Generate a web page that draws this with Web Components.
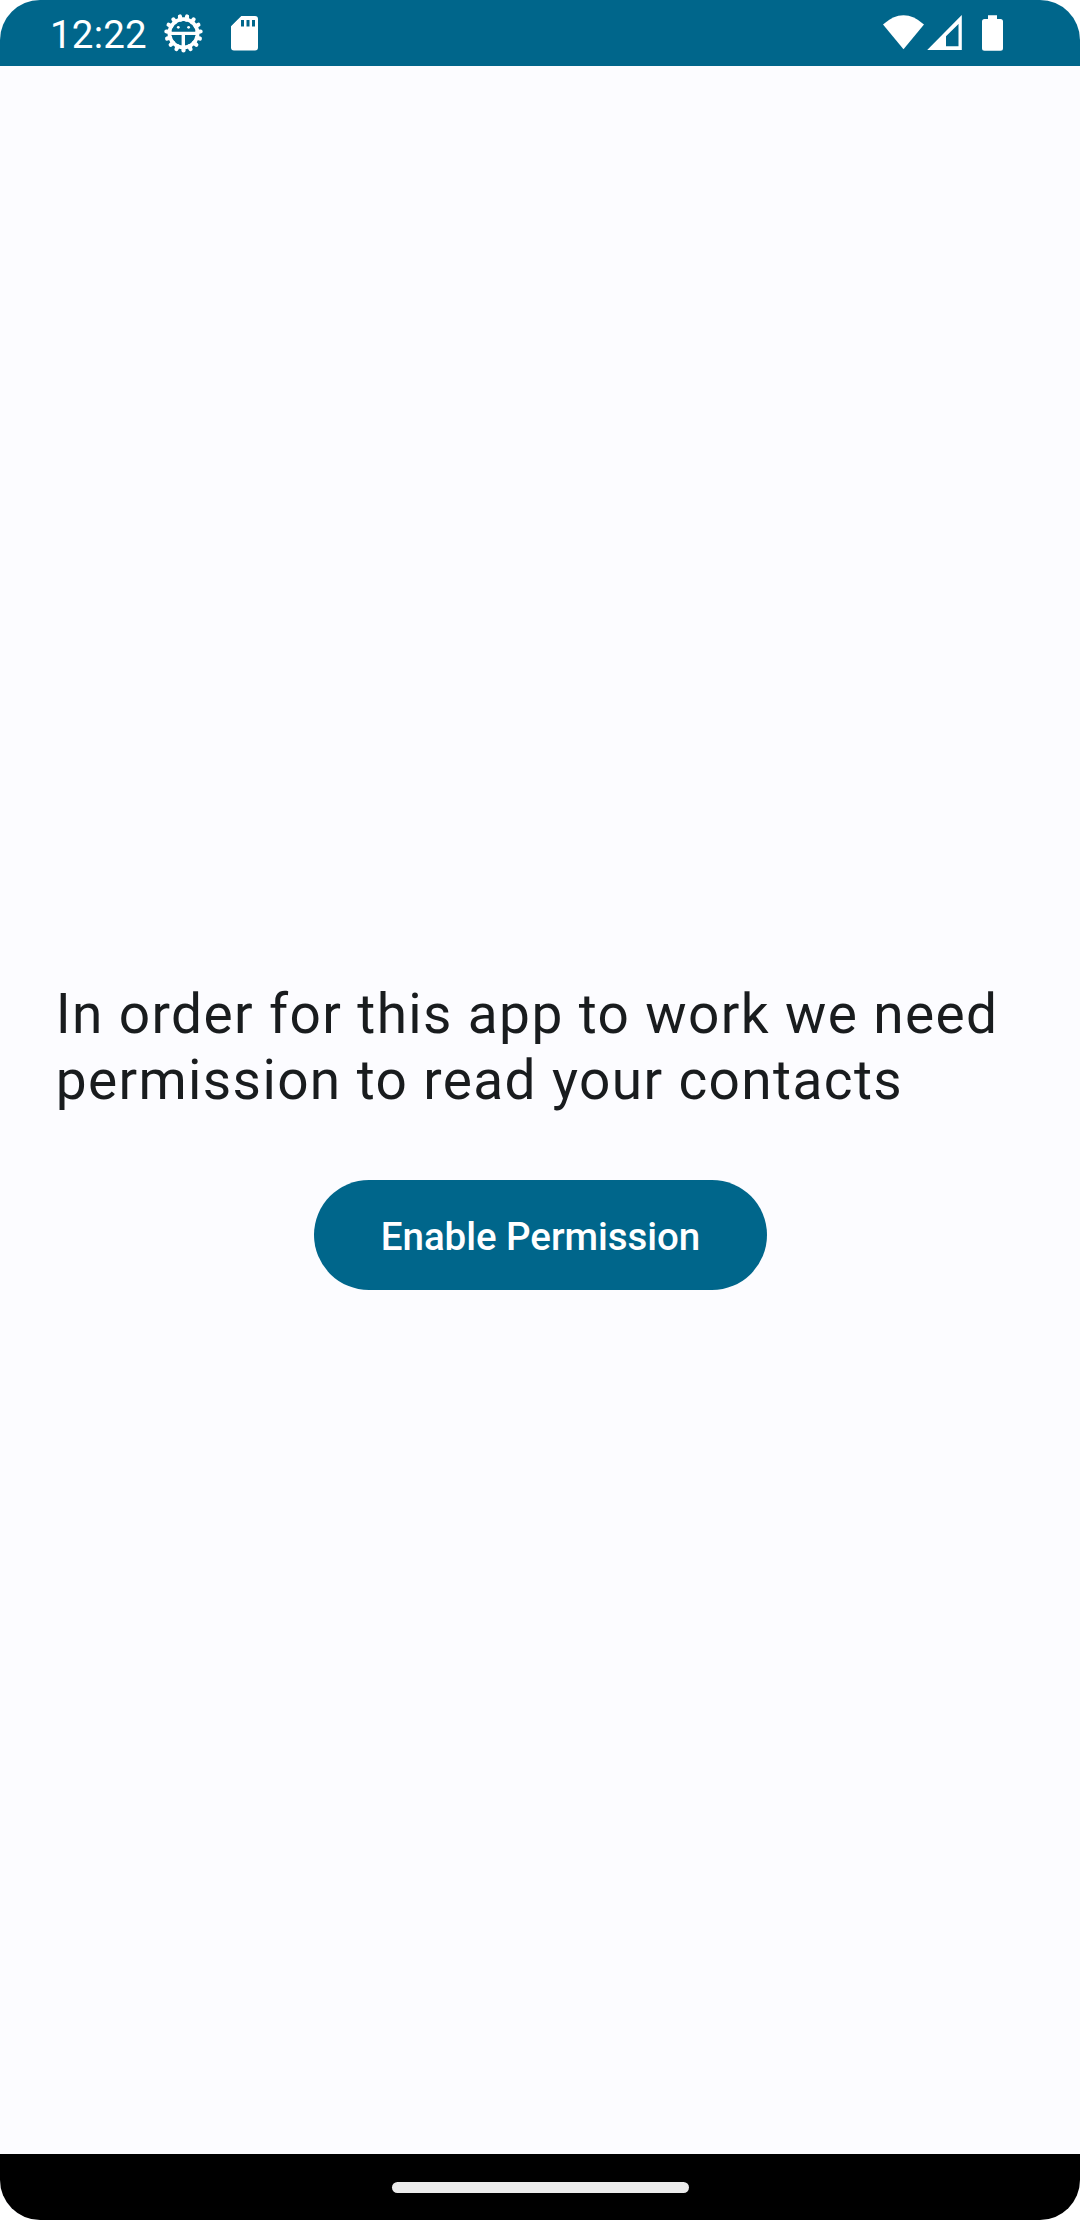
<!DOCTYPE html>
<html lang="en">
<head>
<meta charset="utf-8">
<title>Contacts permission</title>
<style>
html,body{margin:0;height:100%;background:#fff}
body{font-family:Roboto,"Noto Sans",sans-serif}
</style>
</head>
<body>
<phone-screen>
  <status-bar slot="top">12:22</status-bar>
  <permission-panel>In order for this app to work we need permission to read your contacts
    <pill-button slot="action">Enable Permission</pill-button>
  </permission-panel>
  <nav-bar slot="bottom"></nav-bar>
</phone-screen>
<script>
function define(name, html, setup) {
  customElements.define(name, class extends HTMLElement {
    constructor() {
      super();
      this.attachShadow({mode: 'open'}).innerHTML = html;
      if (setup) setup(this.shadowRoot);
    }
  });
}
define('phone-screen', `<style>
:host{display:flex;flex-direction:column;width:1080px;height:2220px;border-radius:40px;overflow:hidden;background:#fcfcff}
main{flex:1;display:flex;min-height:0}
</style><slot name="top"></slot><main><slot></slot></main><slot name="bottom"></slot>`);

define('status-bar', `<style>
:host{display:flex;height:66px;flex:none;box-sizing:border-box;background:#00668b;color:#fff;justify-content:space-between;font-size:38.5px;line-height:66px}
div{display:flex}
.left{padding-left:50px}
.time{width:100px;padding-top:2px;height:64px;letter-spacing:.2px;white-space:nowrap}
svg{display:block;fill:#fff}
</style>
<div class="left"><span class="time"><slot></slot></span>
<svg width="130" height="66" viewBox="150 0 130 66">
  <g id="teeth" stroke="#fff" stroke-width="4.2" stroke-linecap="round"></g>
  <circle cx="183.5" cy="33.3" r="14.1" fill="none" stroke="#fff" stroke-width="3.8"/>
  <path d="M170 31.7h27v3.2h-12v13h-3.4v-13H170z"/>
  <circle cx="178.3" cy="27.3" r="1.4"/><circle cx="188.6" cy="27.3" r="1.4"/>
  <path fill-rule="evenodd" d="M241.3 16H255a3 3 0 0 1 3 3V47.5a3 3 0 0 1-3 3H234a3 3 0 0 1-3-3V26.3zM241 20v6.5h3V20zM246.5 20v6.5h3V20zM252 20v6.5h3V20z"/>
</svg></div>
<svg width="220" height="66" viewBox="860 0 220 66">
  <path d="M883 24.5Q903.5 6 924 24.5L903.5 49.3z"/>
  <path fill-rule="evenodd" d="M961.8 15V50H927.2zM958.5 24L946 36.3V46.3H958.5z"/>
  <path d="M988 15.3h9v3.7h3.5a2.5 2.5 0 0 1 2.5 2.5V48.2a2.5 2.5 0 0 1-2.5 2.5h-16a2.5 2.5 0 0 1-2.5-2.5V21.5a2.5 2.5 0 0 1 2.5-2.5H988z"/>
</svg>`, root => {
  const g = root.getElementById('teeth');
  for (let i = 0; i < 15; i++) {
    const a = Math.PI / 2 + i * Math.PI * 2 / 15;
    const l = document.createElementNS('http://www.w3.org/2000/svg', 'line');
    l.setAttribute('x1', 183.5 + 14 * Math.cos(a)); l.setAttribute('y1', 33.3 + 14 * Math.sin(a));
    l.setAttribute('x2', 183.5 + 17.2 * Math.cos(a)); l.setAttribute('y2', 33.3 + 17.2 * Math.sin(a));
    g.append(l);
  }
});

define('permission-panel', `<style>
:host{display:flex;flex:1;flex-direction:column;justify-content:center;align-items:center;padding:51px 55px 0;box-sizing:border-box}
p{margin:0 0 67px;padding-left:.7px;box-sizing:border-box;width:100%;font-size:55px;line-height:66px;letter-spacing:1.375px;color:#191c1e}
</style><p><slot></slot></p><slot name="action"></slot>`);

define('pill-button', `<style>
:host{display:block;padding-left:1px}
button{display:flex;align-items:center;justify-content:center;width:453px;height:110px;padding:3px 0 0;border:0;border-radius:55px;background:#00668b;color:#fff;font:500 38.5px/55px Roboto,sans-serif;letter-spacing:-.05px;white-space:nowrap}
</style><button><slot></slot></button>`);

define('nav-bar', `<style>
:host{display:flex;flex:none;height:66px;background:#000;align-items:center;justify-content:center}
div{width:297px;height:11px;border-radius:6px;background:#ebebeb}
</style><div></div>`);
</script>
</body>
</html>
